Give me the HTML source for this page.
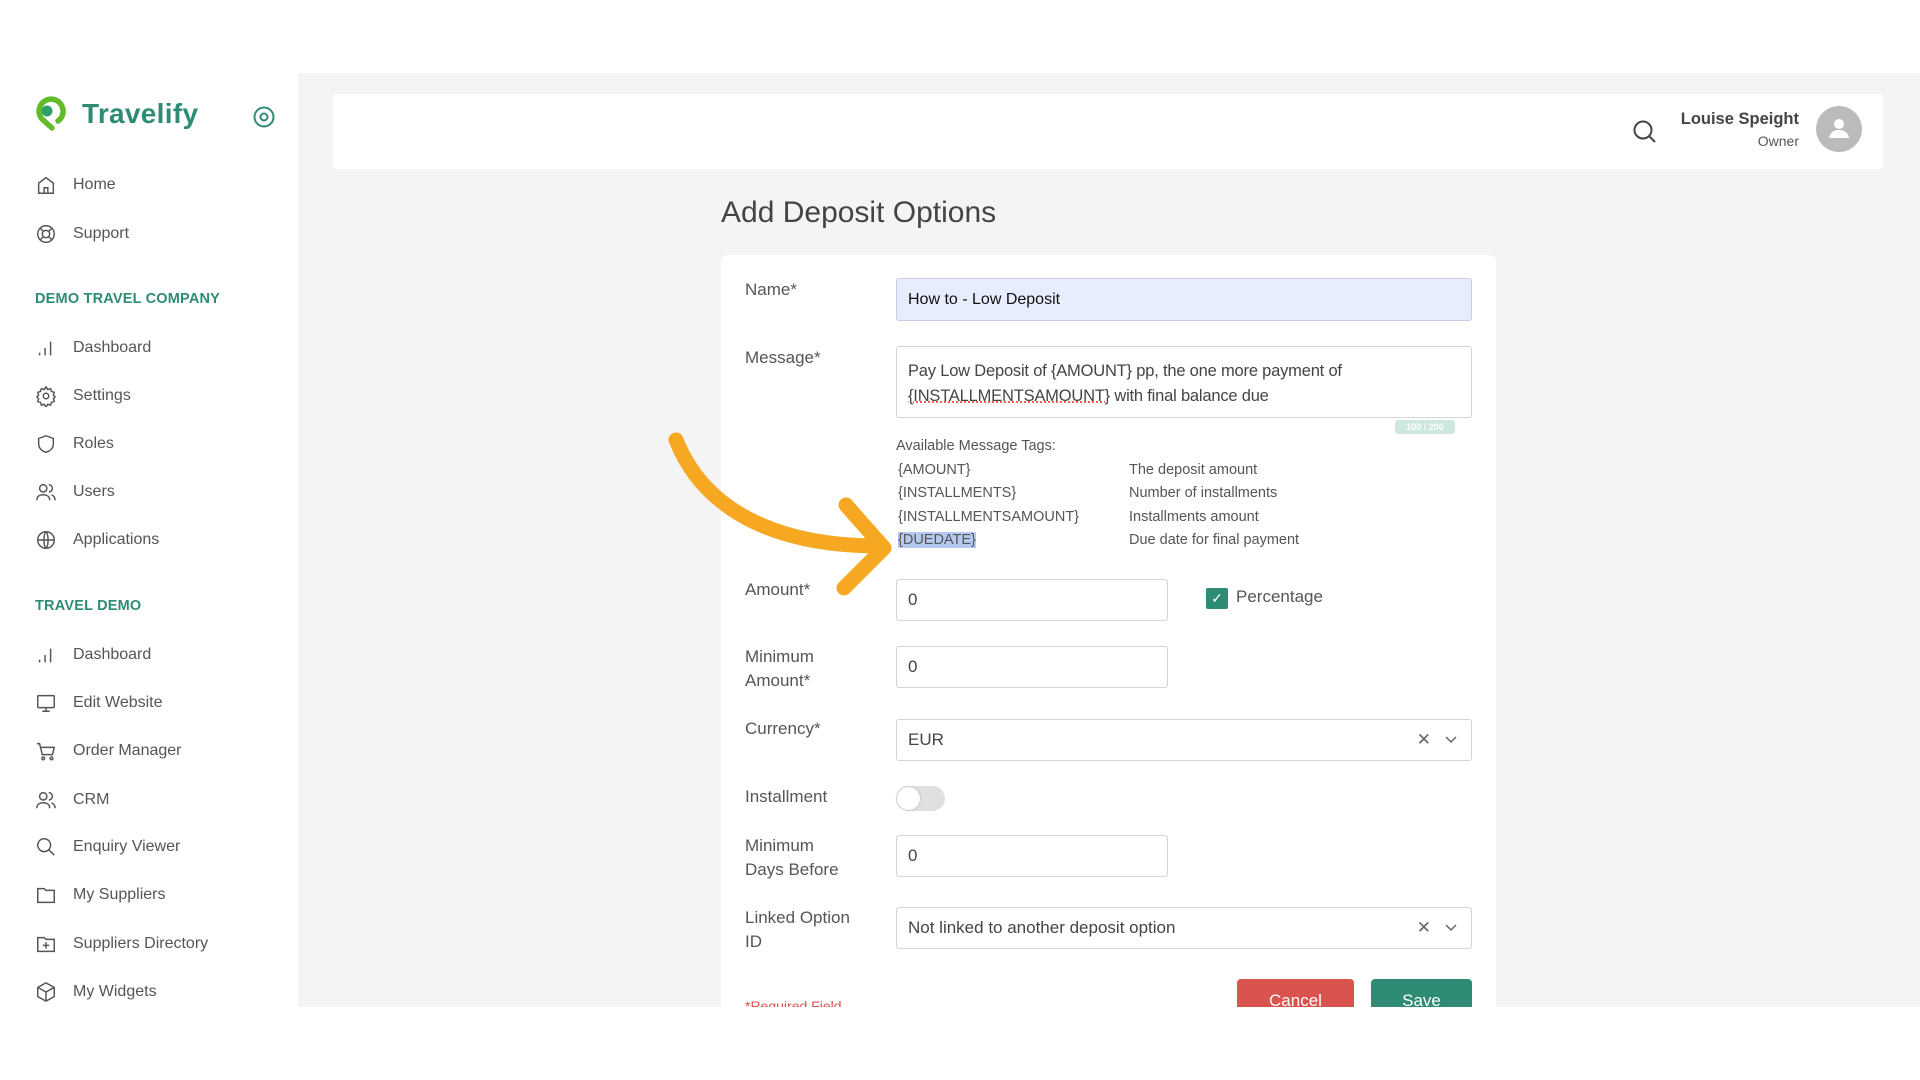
<!DOCTYPE html>
<html><head><meta charset="utf-8"><style>
*{box-sizing:border-box;margin:0;padding:0}
body{width:1920px;height:1080px;background:#fff;font-family:"Liberation Sans",sans-serif;position:relative;overflow:hidden;color:#444}
.abs{position:absolute}
.main{left:298px;top:73px;width:1622px;height:934px;background:#f4f4f4}
.side{left:0;top:73px;width:298px;height:934px;background:#fff}
.nav{position:absolute;left:35px;font-size:16px;color:#555;display:flex;align-items:center;height:24px;transform:translateY(-12px)}
.nav svg{width:22px;height:22px;margin-right:16px;fill:none;stroke:#555;stroke-width:1.6}
.hd{position:absolute;left:35px;font-size:14.5px;color:#2e8b74;font-weight:bold;letter-spacing:.2px;transform:translateY(-9px)}
.card{left:721px;top:255px;width:775px;height:800px;background:#fff;border-radius:6px}
.lbl{position:absolute;left:745px;font-size:17px;color:#555;line-height:24px}
.inp{position:absolute;border:1px solid #d4d4d4;border-radius:3px;background:#fff;font-size:17px;color:#444;padding-left:11px;display:flex;align-items:center}
.tag{position:absolute;font-size:14.5px;color:#555}
.x{position:absolute;right:40px;font-size:17px;color:#666}
.chev{position:absolute;right:12px;width:16px;height:16px}
</style></head><body>
<div class="abs main"></div>
<div class="abs side"></div>
<!-- logo -->
<svg class="abs" style="left:28px;top:95px" width="38" height="42" viewBox="0 0 38 42"><path d="M24 33L14 24A12 12 0 1 1 30 26" fill="none" stroke="#62bb28" stroke-width="5.5" stroke-linecap="round" stroke-linejoin="round"/><circle cx="19" cy="16" r="5.5" fill="#2e9f6a"/></svg>
<div class="abs" style="left:82px;top:98px;font-size:28px;font-weight:bold;color:#2e8b74;letter-spacing:.3px">Travelify</div>
<svg class="abs" style="left:253px;top:106px" width="22" height="22" viewBox="0 0 22 22"><circle cx="11" cy="11" r="9.5" fill="none" stroke="#2e8b74" stroke-width="2"/><circle cx="11" cy="11" r="3.5" fill="none" stroke="#2e8b74" stroke-width="2"/></svg>

<div class="nav" style="top:185px"><svg viewBox="0 0 24 24"><path d="M4 21V10l8-6 8 6v11H4zM10 21v-6h4v6"/></svg>Home</div>
<div class="nav" style="top:234px"><svg viewBox="0 0 24 24"><circle cx="12" cy="12" r="9"/><circle cx="12" cy="12" r="4"/><path d="M6 6l3 3M18 6l-3 3M6 18l3-3M18 18l-3-3"/></svg>Support</div>
<div class="hd" style="top:300px">DEMO TRAVEL COMPANY</div>
<div class="nav" style="top:348px"><svg viewBox="0 0 24 24"><path d="M5 20v-3M11 20v-8M17 20V5"/></svg>Dashboard</div>
<div class="nav" style="top:396px"><svg viewBox="0 0 24 24"><circle cx="12" cy="12" r="3"/><path d="M12 2l2 3 3-1 1 3 3 1-1 3 2 2-2 2 1 3-3 1-1 3-3-1-2 3-2-3-3 1-1-3-3-1 1-3-2-2 2-2-1-3 3-1 1-3 3 1z"/></svg>Settings</div>
<div class="nav" style="top:444px"><svg viewBox="0 0 24 24"><path d="M12 3l8 3v6c0 5-4 8-8 9-4-1-8-4-8-9V6z"/></svg>Roles</div>
<div class="nav" style="top:492px"><svg viewBox="0 0 24 24"><circle cx="9" cy="8" r="4"/><path d="M2 21c0-4 3-6 7-6s7 2 7 6M15 4a4 4 0 0 1 0 8M18 15c2 1 4 3 4 6"/></svg>Users</div>
<div class="nav" style="top:540px"><svg viewBox="0 0 24 24"><circle cx="12" cy="12" r="9"/><path d="M3 12h18M12 3c3 3 3 15 0 18M12 3c-3 3-3 15 0 18"/></svg>Applications</div>
<div class="hd" style="top:607px">TRAVEL DEMO</div>
<div class="nav" style="top:655px"><svg viewBox="0 0 24 24"><path d="M5 20v-3M11 20v-8M17 20V5"/></svg>Dashboard</div>
<div class="nav" style="top:703px"><svg viewBox="0 0 24 24"><rect x="3" y="4" width="18" height="13" rx="1"/><path d="M12 17v4M8 21h8"/></svg>Edit Website</div>
<div class="nav" style="top:751px"><svg viewBox="0 0 24 24"><path d="M2 4h3l3 12h11l2-8H6"/><circle cx="9" cy="20" r="1.5"/><circle cx="18" cy="20" r="1.5"/></svg>Order Manager</div>
<div class="nav" style="top:800px"><svg viewBox="0 0 24 24"><circle cx="9" cy="8" r="4"/><path d="M2 21c0-4 3-6 7-6s7 2 7 6M15 4a4 4 0 0 1 0 8M18 15c2 1 4 3 4 6"/></svg>CRM</div>
<div class="nav" style="top:847px"><svg viewBox="0 0 24 24"><circle cx="10" cy="10" r="7"/><path d="M15 15l6 6"/></svg>Enquiry Viewer</div>
<div class="nav" style="top:895px"><svg viewBox="0 0 24 24"><path d="M3 5h7l2 2h9v13H3z"/></svg>My Suppliers</div>
<div class="nav" style="top:944px"><svg viewBox="0 0 24 24"><path d="M3 5h7l2 2h9v13H3zM12 10v7M8.5 13.5h7"/></svg>Suppliers Directory</div>
<div class="nav" style="top:992px"><svg viewBox="0 0 24 24"><path d="M12 2l9 5v10l-9 5-9-5V7zM3 7l9 5 9-5M12 12v10"/></svg>My Widgets</div>

<!-- header -->
<div class="abs" style="left:333px;top:94px;width:1550px;height:75px;background:#fff;border-radius:4px"></div>
<svg class="abs" style="left:1632px;top:119px" width="25" height="25" viewBox="0 0 25 25"><circle cx="11" cy="11" r="8.5" fill="none" stroke="#444" stroke-width="2"/><path d="M17 17l6 6" stroke="#444" stroke-width="2"/></svg>
<div class="abs" style="right:121px;top:110px;font-size:16.5px;font-weight:bold;color:#444;text-align:right">Louise Speight</div>
<div class="abs" style="right:121px;top:133px;font-size:14px;color:#555;text-align:right">Owner</div>
<svg class="abs" style="left:1816px;top:106px" width="46" height="46" viewBox="0 0 46 46"><circle cx="23" cy="23" r="23" fill="#bbb"/><circle cx="23" cy="18" r="5" fill="#fff"/><path d="M13 32c1-6 5-8 10-8s9 2 10 8z" fill="#fff"/></svg>

<div class="abs" style="left:721px;top:196px;font-size:30px;color:#444;font-weight:500">Add Deposit Options</div>
<div class="abs card"></div>

<div class="lbl" style="top:278px">Name*</div>
<div class="inp" style="left:896px;top:278px;width:576px;height:43px;background:#e8edfd;border-color:#c7cde6;font-size:16px;color:#111">How to - Low Deposit</div>
<div class="lbl" style="top:346px">Message*</div>
<div class="inp" style="display:block;left:896px;top:346px;width:576px;height:72px;padding-top:12px;line-height:25px;font-size:16.5px;letter-spacing:-.2px">Pay Low Deposit of {AMOUNT} pp, the one more payment of<br><span style="text-decoration:underline dotted #e44">{INSTALLMENTSAMOUNT}</span> with final balance due</div>
<div class="abs" style="left:1395px;top:420px;width:60px;height:14px;background:#cfe8df;border-radius:3px;font-size:9px;color:#fff;text-align:center;line-height:14px;font-weight:bold">100 / 200</div>
<div class="tag" style="left:896px;top:438px">Available Message Tags:</div>
<div class="tag" style="left:898px;top:462px">{AMOUNT}</div>
<div class="tag" style="left:898px;top:485px">{INSTALLMENTS}</div>
<div class="tag" style="left:898px;top:509px">{INSTALLMENTSAMOUNT}</div>
<div class="tag" style="left:898px;top:532px;background:#b4c8f0">{DUEDATE}</div>
<div class="tag" style="left:1129px;top:462px">The deposit amount</div>
<div class="tag" style="left:1129px;top:485px">Number of installments</div>
<div class="tag" style="left:1129px;top:509px">Installments amount</div>
<div class="tag" style="left:1129px;top:532px">Due date for final payment</div>

<div class="lbl" style="top:578px">Amount*</div>
<div class="inp" style="left:896px;top:579px;width:272px;height:42px">0</div>
<div class="abs" style="left:1206px;top:588px;width:22px;height:21px;background:#2e8b74;border-radius:2px;color:#fff;font-size:14px;text-align:center;line-height:21px">✓</div>
<div class="abs" style="left:1236px;top:587px;font-size:17px;color:#555">Percentage</div>

<div class="lbl" style="top:645px">Minimum<br>Amount*</div>
<div class="inp" style="left:896px;top:646px;width:272px;height:42px">0</div>
<div class="lbl" style="top:717px">Currency*</div>
<div class="inp" style="left:896px;top:719px;width:576px;height:42px">EUR<span class="x">✕</span><svg class="chev" viewBox="0 0 16 16"><path d="M3 5l5 5 5-5" fill="none" stroke="#666" stroke-width="1.5"/></svg></div>
<div class="lbl" style="top:785px">Installment</div>
<div class="abs" style="left:896px;top:786px;width:49px;height:25px;background:#e0e0e0;border-radius:13px"></div>
<div class="abs" style="left:897px;top:787px;width:23px;height:23px;background:#fff;border-radius:50%;box-shadow:0 0 2px #aaa"></div>
<div class="lbl" style="top:834px">Minimum<br>Days Before</div>
<div class="inp" style="left:896px;top:835px;width:272px;height:42px">0</div>
<div class="lbl" style="top:906px">Linked Option<br>ID</div>
<div class="inp" style="left:896px;top:907px;width:576px;height:42px">Not linked to another deposit option<span class="x">✕</span><svg class="chev" viewBox="0 0 16 16"><path d="M3 5l5 5 5-5" fill="none" stroke="#666" stroke-width="1.5"/></svg></div>
<div class="abs" style="left:1237px;top:979px;width:117px;height:40px;background:#d9534f;border-radius:4px;color:#fff;font-size:17px;text-align:center;padding-top:12px">Cancel</div>
<div class="abs" style="left:1371px;top:979px;width:101px;height:40px;background:#2e8b74;border-radius:4px;color:#fff;font-size:17px;text-align:center;padding-top:12px">Save</div>
<div class="abs" style="left:745px;top:998px;font-size:14px;color:#e05050">*Required Field</div>
<div class="abs" style="left:0;top:1007px;width:1920px;height:73px;background:#fff"></div>

<!-- arrow -->
<svg class="abs" style="left:0;top:0" width="1920" height="1080"><path d="M676 440C700 500 760 545 876 546" fill="none" stroke="#f7a823" stroke-width="15" stroke-linecap="round"/><path d="M846 505L884 548L844 588" fill="none" stroke="#f7a823" stroke-width="15" stroke-linecap="round" stroke-linejoin="round"/></svg>
</body></html>
